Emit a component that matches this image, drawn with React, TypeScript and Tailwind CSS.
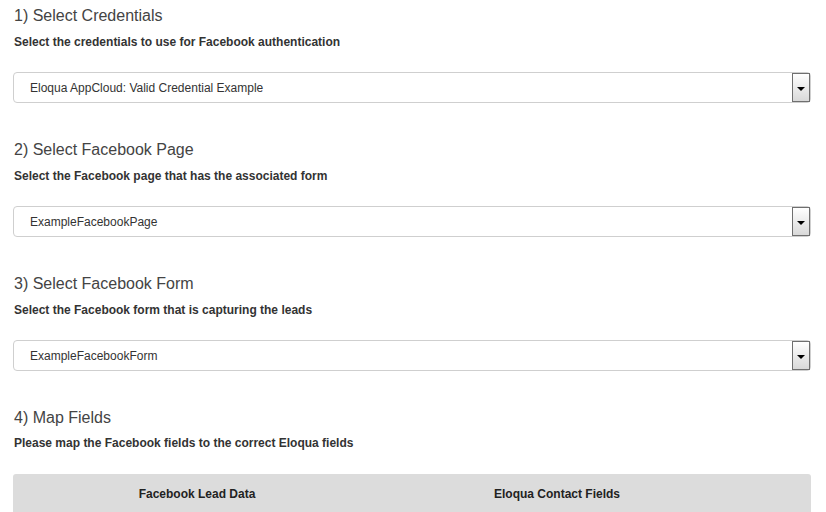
const sections = [
  {
    title: "1) Select Credentials",
    hint: "Select the credentials to use for Facebook authentication",
    value: "Eloqua AppCloud: Valid Credential Example",
  },
  {
    title: "2) Select Facebook Page",
    hint: "Select the Facebook page that has the associated form",
    value: "ExampleFacebookPage",
  },
  {
    title: "3) Select Facebook Form",
    hint: "Select the Facebook form that is capturing the leads",
    value: "ExampleFacebookForm",
  },
];

const FakeSelect = ({ value }: { value: string }) => (
  <div className="relative h-[31px] mx-[13px] w-[798px] rounded-[4px] border border-[#cfcfcf] bg-white flex items-center">
    <span className="pl-[16px] text-[12px] text-[#333]">{value}</span>
    <div className="absolute right-0 top-0 bottom-0 w-[18px] border border-[#6f6f6f] bg-gradient-to-b from-white to-[#d9d9d9] flex items-center justify-center">
      <div className="w-0 h-0 border-l-[4px] border-r-[4px] border-t-[4px] border-l-transparent border-r-transparent border-t-black mt-[2px]" />
    </div>
  </div>
);

export default function App() {
  return (
    <div className="w-[826px] h-[512px] overflow-hidden bg-white text-[#333] font-['Liberation_Sans',Arial,sans-serif] pt-[6px]">
      {sections.map((s) => (
        <div key={s.title} className="mb-[37px]">
          <h2 className="px-[14px] text-[16px] leading-[20px] text-[#444]">{s.title}</h2>
          <p className="px-[14px] mt-[8px] text-[12px] leading-[16px] font-bold text-[#333]">{s.hint}</p>
          <div className="mt-[22px]">
            <FakeSelect value={s.value} />
          </div>
        </div>
      ))}
      <div>
        <h2 className="px-[14px] text-[16px] leading-[20px] text-[#444]">4) Map Fields</h2>
        <p className="px-[14px] mt-[7px] text-[12px] leading-[16px] font-bold text-[#333]">
          Please map the Facebook fields to the correct Eloqua fields
        </p>
        <div className="mt-[23px] mx-[13px] w-[798px] h-[40px] rounded-t-[3px] bg-[#dcdcdc] flex items-center text-[12px] font-bold text-[#222]">
          <div className="w-[368px] text-center">Facebook Lead Data</div>
          <div className="w-[352px] text-center">Eloqua Contact Fields</div>
          <div className="flex-1" />
        </div>
      </div>
    </div>
  );
}
